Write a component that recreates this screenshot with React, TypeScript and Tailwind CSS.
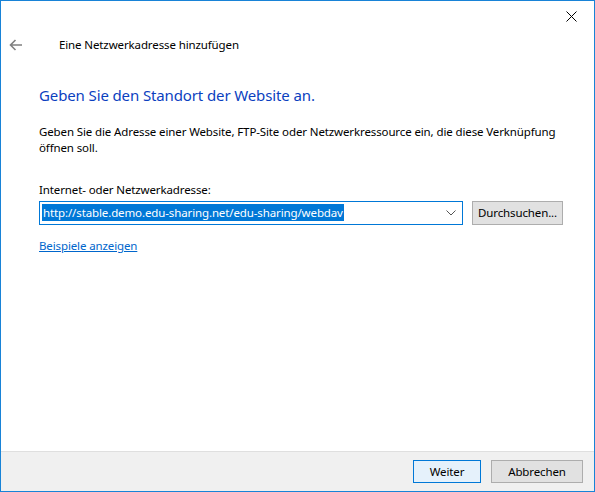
import React from "react";

const font = { fontFamily: '"Noto Sans", "Open Sans", sans-serif' };

const App: React.FC = () => {
  return (
    <div
      className="w-[595px] h-[492px] bg-white border border-[#1883d7] flex flex-col text-[11.5px] tracking-[-0.12px] text-black"
      style={font}
    >
      {/* Title bar */}
      <div className="h-[31px] flex justify-end items-start">
        <button className="w-[46px] h-[31px] flex items-center justify-center">
          <svg width="11" height="11" viewBox="0 0 11 11">
            <path d="M0.5 0.5 L10.5 10.5 M10.5 0.5 L0.5 10.5" stroke="#000" strokeWidth="1" />
          </svg>
        </button>
      </div>

      {/* Header with back arrow */}
      <div className="h-[26px] flex items-center">
        <div className="w-[58px] pl-[8px] flex items-center">
          <svg width="14" height="12" viewBox="0 0 14 12">
            <path d="M13 6 H1.5 M6.5 1 L1.5 6 L6.5 11" stroke="#808080" strokeWidth="1.6" fill="none" />
          </svg>
        </div>
        <span className="leading-none">Eine Netzwerkadresse hinzufügen</span>
      </div>

      {/* Content */}
      <div className="flex-1 pl-[38px] pr-[30px] pt-[27px]">
        <h1 className="text-[15px] leading-[20px] text-[#0b3fbf]">
          Geben Sie den Standort der Website an.
        </h1>
        <p className="mt-[19px] leading-[16px]">
          Geben Sie die Adresse einer Website, FTP-Site oder Netzwerkressource ein, die diese Verknüpfung
          öffnen soll.
        </p>
        <div className="mt-[26px] leading-[16px]">Internet- oder Netzwerkadresse:</div>
        <div className="mt-[3px] flex items-center gap-[9px]">
          <div className="w-[424px] h-[24px] border border-[#0078d7] flex items-center pl-[2px] pr-[6px]">
            <span className="flex-1">
              <span className="bg-[#0078d7] text-white leading-[17px] inline-block px-[1px]">
                http://stable.demo.edu-sharing.net/edu-sharing/webdav
              </span>
            </span>
            <svg width="10" height="6" viewBox="0 0 10 6">
              <path d="M0.5 0.5 L5 5 L9.5 0.5" stroke="#555" strokeWidth="1" fill="none" />
            </svg>
          </div>
          <button className="w-[91px] h-[24px] bg-[#e1e1e1] border border-[#adadad] flex items-center justify-center">
            Durchsuchen...
          </button>
        </div>
        <a className="inline-block mt-[13px] text-[#0066cc] underline leading-[16px]">Beispiele anzeigen</a>
      </div>

      {/* Footer */}
      <div className="h-[40px] bg-[#f0f0f0] border-t border-[#dfdfdf] flex justify-end items-center gap-[10px] pr-[11px]">
        <button className="w-[68px] h-[23px] bg-[#e5f1fb] border border-[#0078d7] flex items-center justify-center">
          Weiter
        </button>
        <button className="w-[92px] h-[23px] bg-[#e1e1e1] border border-[#adadad] flex items-center justify-center">
          Abbrechen
        </button>
      </div>
    </div>
  );
};

export default App;
